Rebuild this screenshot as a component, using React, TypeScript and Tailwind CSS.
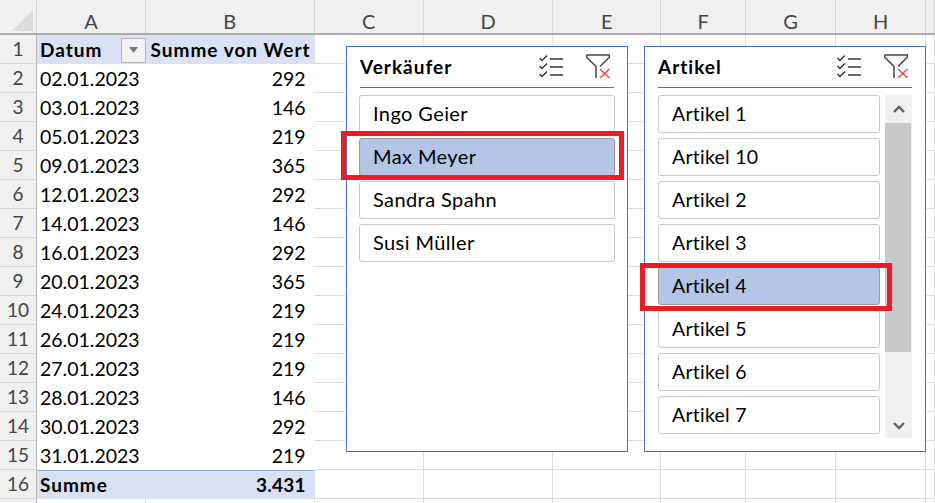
const cols = [109, 169, 109, 130, 108, 85, 90, 90, 9];
const colNames = ["A", "B", "C", "D", "E", "F", "G", "H", ""];
const data: [string, string][] = [
  ["02.01.2023", "292"], ["03.01.2023", "146"], ["05.01.2023", "219"], ["09.01.2023", "365"],
  ["12.01.2023", "292"], ["14.01.2023", "146"], ["16.01.2023", "292"], ["20.01.2023", "365"],
  ["24.01.2023", "219"], ["26.01.2023", "219"], ["27.01.2023", "219"], ["28.01.2023", "146"],
  ["30.01.2023", "292"], ["31.01.2023", "219"],
];
const font = { fontFamily: "Lato, 'Open Sans', sans-serif" };

function ChecklistIcon() {
  return (
    <svg width="24" height="23" viewBox="0 0 24 23" fill="none" stroke="#3a3a3a" strokeWidth="1.5">
      <path d="M0.5 3 L3 5.5 L8 0.5 M0.5 11 L3 13.5 L8 8.5 M0.5 19 L3 21.5 L8 16.5" />
      <path d="M11 4 H24 M11 12 H24 M11 20 H24" strokeWidth="1.7" />
    </svg>
  );
}
function ClearFilterIcon() {
  return (
    <svg width="24" height="24" viewBox="0 0 24 24" fill="none">
      <path d="M0.5 1 H23.5 V3 L14 12.5 M0.5 1 V3 L10 12.5 V24" stroke="#444" strokeWidth="1.5" />
      <path d="M14 15 L23.5 24 M23.5 15 L14 24" stroke="#ea4b4b" strokeWidth="1.5" />
    </svg>
  );
}
function Item({ label, selected, wide }: { label: string; selected?: boolean; wide?: boolean }) {
  return (
    <div
      className={`h-[38px] shrink-0 rounded-[3px] border pl-[13px] leading-[35px] text-black ${
        wide ? "text-[20px] tracking-[0.4px]" : "text-[19.5px] tracking-[0.25px]"
      } ${selected ? "border-[#9a9a9a] bg-[#b3c6e7]" : "border-[#c8c8c8] bg-white"}`}
    >
      {label}
    </div>
  );
}
function Header({ title }: { title: string }) {
  return (
    <div className="flex h-[41px] items-center border-b border-[#4472c4] pr-[4px] pb-[2px]">
      <span className="flex-1 pt-[2px] text-[19px] font-bold tracking-[1px] text-black">{title}</span>
      <ChecklistIcon />
      <span className="ml-[23px] flex"><ClearFilterIcon /></span>
    </div>
  );
}

export default function App() {
  return (
    <div className="relative h-[503px] w-[935px] overflow-hidden bg-white" style={font}>
      {/* header row */}
      <div className="flex h-[35px] border-b-2 border-[#ababab] bg-[#f0f0f0]">
        <div className="relative w-[37px] border-r border-[#d8d8d8]">
          <svg className="absolute left-[12px] top-[10px]" width="21" height="21" viewBox="0 0 21 21">
            <path d="M21 0 V21 H0 Z" fill="#dcdcdc" />
          </svg>
        </div>
        {cols.map((w, i) => (
          <div key={i} className="flex items-center justify-center border-r border-[#d8d8d8] pt-[8px] text-[20px] text-[#444]" style={{ width: w }}>
            {colNames[i]}
          </div>
        ))}
      </div>
      {/* rows */}
      {Array.from({ length: 17 }, (_, r) => {
        const isHead = r === 0;
        const isTotal = r === 15;
        const isBlank = r === 16;
        const d = !isHead && !isTotal && !isBlank ? data[r - 1] : null;
        const band = isHead || isTotal;
        return (
          <div key={r} className="flex h-[29px]">
            <div className="flex w-[37px] items-center justify-center border-b border-r border-[#b5b5b5] border-b-[#d8d8d8] bg-[#f0f0f0] pt-[1px] text-[19px] text-[#444]">
              {isBlank ? "" : r + 1}
            </div>
            {isBlank ? (
              <>
                <div className="w-[109px] border-r border-[#dcdcdc]" />
                <div className="w-[169px] border-r border-[#dcdcdc]" />
              </>
            ) : (
              <div
                className={`flex w-[278px] items-center justify-between pl-[3px] pr-[4px] pt-[1px] text-black ${
                  band ? "bg-[#d9e1f2] text-[19px] font-bold tracking-[1px]" : "bg-white text-[19.5px]"
                } ${isTotal ? "border-t border-[#8ea9db]" : ""}`}
              >
                {isHead && (
                  <>
                    <span className="flex w-[108px] items-center justify-between pr-[2px]">
                      Datum
                      <span className="flex h-[25px] w-[25px] items-center justify-center border border-[#b4b4b4] bg-[#f2f2f2]">
                        <svg width="11" height="6" viewBox="0 0 11 6"><path d="M1 0 H10 L5.5 6 Z" fill="#777" /></svg>
                      </span>
                    </span>
                    <span>Summe von Wert</span>
                  </>
                )}
                {d && (<><span>{d[0]}</span><span className="pr-[5px]">{d[1]}</span></>)}
                {isTotal && (<><span>Summe</span><span className="pr-[5px] tracking-[0.2px]">3.431</span></>)}
              </div>
            )}
            {cols.slice(2).map((w, i) => (
              <div key={i} className="border-b border-r border-[#dcdcdc]" style={{ width: w }} />
            ))}
          </div>
        );
      })}

      {/* Slicer Verkäufer */}
      <div className="absolute left-[346px] top-[46px] flex h-[406px] w-[282px] flex-col border border-[#4472c4] bg-white px-[13px]">
        <Header title="Verkäufer" />
        <div className="-mx-[1px] mt-[7px] flex flex-col gap-[5px]">
          <Item wide label="Ingo Geier" />
          <Item wide label="Max Meyer" selected />
          <Item wide label="Sandra Spahn" />
          <Item wide label="Susi Müller" />
        </div>
      </div>

      {/* Slicer Artikel */}
      <div className="absolute left-[644px] top-[46px] flex h-[406px] w-[282px] flex-col border border-[#4472c4] bg-white px-[13px]">
        <Header title="Artikel" />
        <div className="mt-[7px] flex gap-[5px]">
          <div className="flex w-[223px] flex-col gap-[5px]">
            {["Artikel 1", "Artikel 10", "Artikel 2", "Artikel 3", "Artikel 4", "Artikel 5", "Artikel 6", "Artikel 7"].map((a) => (
              <Item key={a} label={a} selected={a === "Artikel 4"} />
            ))}
          </div>
          <div className="flex h-[343px] w-[27px] flex-col bg-[#f0f0f0]">
            <div className="flex h-[28px] items-center justify-center">
              <svg width="12" height="8" viewBox="0 0 12 8"><path d="M1 7 L6 2 L11 7" fill="none" stroke="#606060" strokeWidth="2.4" /></svg>
            </div>
            <div className="h-[229px] w-[26px] bg-[#c8c8c8]" />
            <div className="flex flex-1 items-end justify-center pb-[8px]">
              <svg width="12" height="8" viewBox="0 0 12 8"><path d="M1 1 L6 6 L11 1" fill="none" stroke="#606060" strokeWidth="2.4" /></svg>
            </div>
          </div>
        </div>
      </div>

      {/* Red highlight boxes */}
      <div className="absolute left-[341px] top-[131px] h-[49px] w-[283px] border-[5px] border-[#ed1c24]" />
      <div className="absolute left-[640px] top-[263px] h-[48px] w-[252px] border-[5px] border-[#ed1c24]" />
    </div>
  );
}
